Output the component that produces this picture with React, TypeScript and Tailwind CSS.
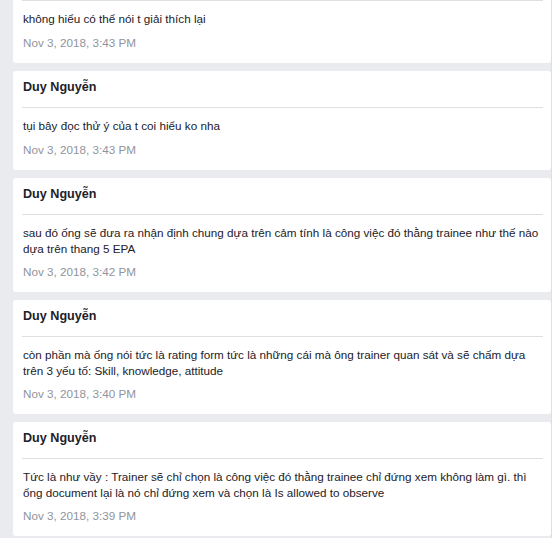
import { Fragment } from "react";

type Comment = {
  id: number;
  author: string;
  lines: string[];
  time: string;
};

const comments: Comment[] = [
  {
    id: 1,
    author: "Duy Nguyễn",
    lines: ["không hiểu có thể nói t giải thích lại"],
    time: "Nov 3, 2018, 3:43 PM",
  },
  {
    id: 2,
    author: "Duy Nguyễn",
    lines: ["tụi bây đọc thử ý của t coi hiểu ko nha"],
    time: "Nov 3, 2018, 3:43 PM",
  },
  {
    id: 3,
    author: "Duy Nguyễn",
    lines: [
      "sau đó ống sẽ đưa ra nhận định chung dựa trên cảm tính là công việc đó thằng trainee như thế nào",
      "dựa trên thang 5 EPA",
    ],
    time: "Nov 3, 2018, 3:42 PM",
  },
  {
    id: 4,
    author: "Duy Nguyễn",
    lines: [
      "còn phần mà ống nói tức là rating form tức là những cái mà ông trainer quan sát và sẽ chấm dựa",
      "trên 3 yếu tố: Skill, knowledge, attitude",
    ],
    time: "Nov 3, 2018, 3:40 PM",
  },
  {
    id: 5,
    author: "Duy Nguyễn",
    lines: [
      "Tức là như vầy : Trainer sẽ chỉ chọn là công việc đó thằng trainee chỉ đứng xem không làm gì. thì",
      "ổng document lại là nó chỉ đứng xem và chọn là Is allowed to observe",
    ],
    time: "Nov 3, 2018, 3:39 PM",
  },
];

function CommentCard({ comment }: { comment: Comment }) {
  const multi = comment.lines.length > 1;
  return (
    <div className="w-[538px] shrink-0 rounded-[3px] bg-white pl-[9px] pr-[8px] pt-[7px] pb-[12px]">
      <div className="h-[18px] pl-px text-[12.6px] font-bold leading-[18px] text-[#1d2129]">
        {comment.author}
      </div>
      <div className="mt-[11px] h-px bg-[#dddfe2]" />
      <p className="mt-[10px] pl-px text-[11.7px] leading-[16px] text-[#1d2129]">
        {comment.lines.map((line, i) => (
          <Fragment key={i}>
            {i > 0 && <br />}
            {line}
          </Fragment>
        ))}
      </p>
      <div
        className={
          multi
            ? "mt-[7px] pl-px text-[11.7px] leading-[16px] text-[#90949c]"
            : "mt-[8px] pl-px text-[11.7px] leading-[16px] text-[#90949c]"
        }
      >
        {comment.time}
      </div>
    </div>
  );
}

export default function App() {
  return (
    <div
      className="flex h-[538px] w-[555px] overflow-hidden bg-white"
      style={{ fontFamily: '"Liberation Sans", Arial, sans-serif' }}
    >
      <div className="w-[552px] border-r border-[#dddfe2] bg-[#e9ebee] pl-[13px]">
        <div className="-mt-[36px] flex flex-col gap-[8px]">
          {comments.map((c) => (
            <CommentCard key={c.id} comment={c} />
          ))}
        </div>
      </div>
    </div>
  );
}
